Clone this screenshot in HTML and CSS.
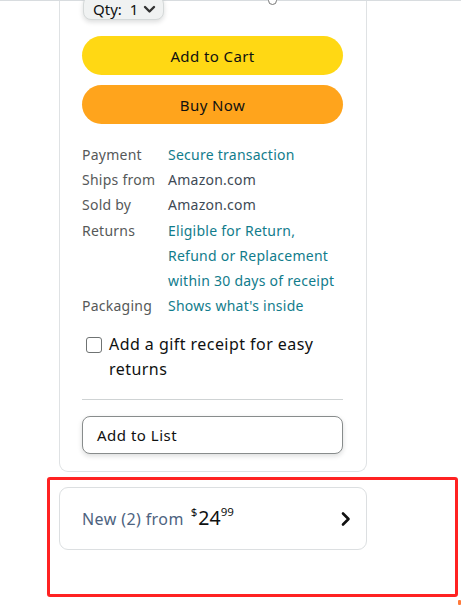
FILE: index.html
```html
<!DOCTYPE html>
<html lang="en">
<head>
<meta charset="utf-8">
<title>Buy box</title>
<link rel="stylesheet" href="styles.css">
</head>
<body>
<div class="topline"></div>
<span class="dot"></span>
<div class="page">
  <div class="card">
    <div class="qty"><span>Qty:</span><span class="qty-num">1</span>
      <svg class="qty-chev" width="13" height="9" viewBox="0 0 13 9"><path d="M2 2 L6.5 6.5 L11 2" fill="none" stroke="#333" stroke-width="2.4" stroke-linecap="round" stroke-linejoin="round"/></svg>
    </div>
    <button class="btn btn-cart">Add to Cart</button>
    <button class="btn btn-buy">Buy Now</button>
    <div class="details">
      <div class="label">Payment</div><div class="value link">Secure transaction</div>
      <div class="label">Ships from</div><div class="value plain">Amazon.com</div>
      <div class="label">Sold by</div><div class="value plain">Amazon.com</div>
      <div class="label">Returns</div><div class="value link">Eligible for Return,<br>Refund or Replacement<br>within 30 days of receipt</div>
      <div class="label">Packaging</div><div class="value link">Shows what's inside</div>
    </div>
    <label class="gift"><span class="box"></span><span class="gift-text">Add a gift receipt for easy returns</span></label>
    <div class="rule"></div>
    <button class="list-btn">Add to List</button>
  </div>
  <div class="offers">
    <span class="offers-text">New (2) from</span>
    <span class="price"><span class="cur">$</span><span class="whole">24</span><span class="frac">99</span></span>
    <svg class="offers-chev" width="12" height="16" viewBox="0 0 12 16"><path d="M3 2.5 L8.5 8 L3 13.5" fill="none" stroke="#111" stroke-width="2.6" stroke-linecap="round" stroke-linejoin="round"/></svg>
  </div>
</div>
<div class="annot"></div>
<span class="mark"></span>
</body>
</html>
```
FILE: styles.css
```css
html, body {
  margin: 0;
  padding: 0;
  background: #ffffff;
}
body {
  width: 461px;
  height: 611px;
  overflow: hidden;
  position: relative;
  font-family: "Noto Sans", "Open Sans", sans-serif;
  color: #0f1111;
}
.topline {
  height: 1px;
  background: #d8dcdf;
}
.dot {
  position: absolute;
  left: 268px;
  top: -4px;
  width: 7px;
  height: 7px;
  border: 1px solid #777;
  border-radius: 50%;
  background: #fff;
}
.page {
  display: flex;
  flex-direction: column;
  padding-left: 59px;
  width: 308px;
}
.card {
  display: flex;
  flex-direction: column;
  border: 1px solid #dfe2e4;
  border-top: none;
  border-radius: 0 0 9px 9px;
  padding: 0 23px 17px 22px;
}
.qty {
  align-self: flex-start;
  display: flex;
  align-items: center;
  margin-top: -5px;
  margin-left: 1px;
  height: 24px;
  box-sizing: border-box;
  padding: 2px 7px 0 9px;
  background: #f0f2f2;
  border: 1px solid #d5d9d9;
  border-radius: 8px;
  box-shadow: 0 2px 5px rgba(15, 17, 17, 0.15);
  font-size: 15px;
  line-height: 16px;
  color: #0f1111;
  position: relative;
  z-index: 1;
}
.qty-num {
  margin-left: 8px;
}
.qty-chev {
  margin-left: 5px;
  margin-top: 1px;
}
.btn {
  display: block;
  width: 261px;
  height: 39px;
  border-radius: 20px;
  border: none;
  font-family: inherit;
  font-size: 15px;
  letter-spacing: 0.4px;
  color: #0f1111;
  padding: 0;
}
.btn-cart {
  margin-top: 16px;
  background: #ffd814;
}
.btn-buy {
  margin-top: 10px;
  background: #ffa41c;
}
.details {
  display: grid;
  grid-template-columns: 86px 1fr;
  margin-top: 18px;
  font-size: 14px;
  letter-spacing: 0.25px;
  line-height: 25.2px;
}
.label {
  color: #565959;
}
.link {
  color: #117c8c;
}
.plain {
  color: #3e4a55;
}
.gift {
  display: flex;
  align-items: flex-start;
  gap: 7px;
  margin-top: 14px;
  padding-left: 4px;
  font-size: 16px;
  letter-spacing: 0.45px;
  line-height: 25px;
}
.box {
  flex: none;
  width: 14px;
  height: 14px;
  margin-top: 5px;
  border: 1px solid #6f7373;
  border-radius: 3px;
  background: #fff;
}
.gift-text {
  width: 230px;
}
.rule {
  height: 1px;
  background: #cfd3d4;
  margin-top: 17px;
}
.list-btn {
  margin-top: 16px;
  height: 38px;
  width: 261px;
  text-align: left;
  padding: 0 14px;
  background: #fff;
  border: 1px solid #888c8c;
  border-radius: 8px;
  box-shadow: 0 2px 5px rgba(15, 17, 17, 0.15);
  font-family: inherit;
  font-size: 15px;
  letter-spacing: 0.5px;
  color: #0f1111;
}
.offers {
  margin-top: 15px;
  height: 63px;
  box-sizing: border-box;
  display: flex;
  align-items: center;
  padding: 0 14px 0 22px;
  border: 1px solid #dcdfe1;
  border-radius: 9px;
  width: 308px;
}
.offers-text {
  font-size: 16px;
  letter-spacing: 0.4px;
  line-height: 20px;
  color: #4d6380;
  margin-right: 7px;
  margin-top: 1px;
}
.price {
  display: flex;
  align-items: flex-start;
  color: #0f1111;
  margin-top: -4px;
}
.cur, .frac {
  font-size: 11.5px;
  line-height: 12px;
}
.cur {
  margin-right: 1px;
}
.whole {
  font-size: 19.5px;
  line-height: 20px;
  margin-top: 2px;
}
.offers-chev {
  margin-left: auto;
}
.annot {
  position: absolute;
  left: 47px;
  top: 477px;
  width: 405px;
  height: 114px;
  border: 3px solid #ff2222;
  border-radius: 3px;
}
.mark {
  position: absolute;
  left: 458px;
  top: 600px;
  width: 3px;
  height: 5px;
  background: #ff7a3a;
  border-radius: 1px;
}
```
